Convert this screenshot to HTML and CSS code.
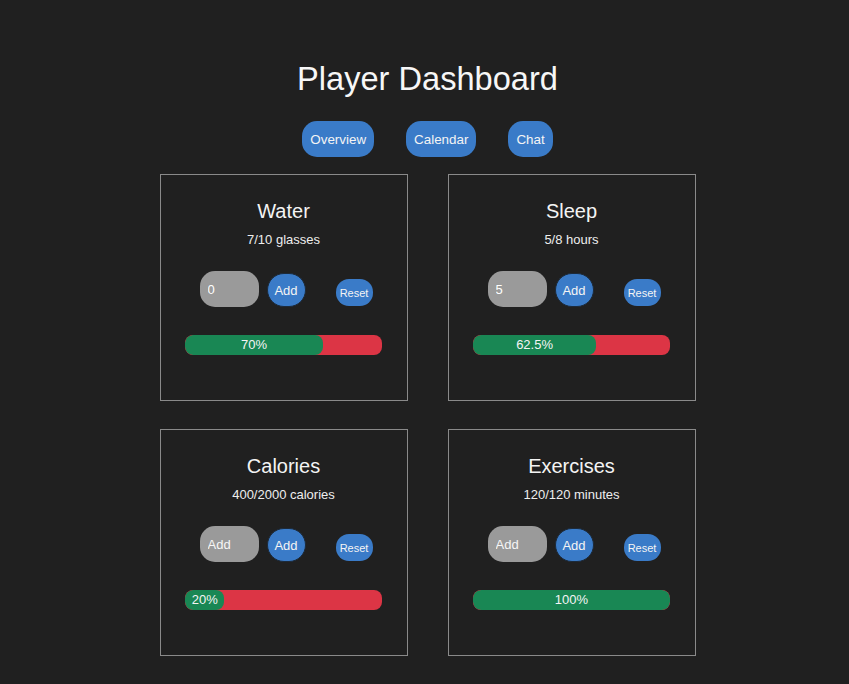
FILE: index.html
```html
<!DOCTYPE html>
<html lang="en">
<head>
<meta charset="utf-8">
<title>Player Dashboard</title>
<link rel="stylesheet" href="styles.css">
</head>
<body>
<div class="page">
  <h1 class="title">Player Dashboard</h1>
  <nav class="nav">
    <button class="nav-btn">Overview</button>
    <button class="nav-btn">Calendar</button>
    <button class="nav-btn">Chat</button>
  </nav>
  <main class="grid">
    <section class="card">
      <h2 class="card-title">Water</h2>
      <p class="card-sub">7/10 glasses</p>
      <div class="controls">
        <input class="amount" type="text" value="0">
        <button class="add-btn">Add</button>
        <button class="reset-btn">Reset</button>
      </div>
      <div class="bar"><div class="fill" style="width:70%">70%</div></div>
    </section>
    <section class="card">
      <h2 class="card-title">Sleep</h2>
      <p class="card-sub">5/8 hours</p>
      <div class="controls">
        <input class="amount" type="text" value="5">
        <button class="add-btn">Add</button>
        <button class="reset-btn">Reset</button>
      </div>
      <div class="bar"><div class="fill" style="width:62.5%">62.5%</div></div>
    </section>
    <section class="card">
      <h2 class="card-title">Calories</h2>
      <p class="card-sub">400/2000 calories</p>
      <div class="controls">
        <input class="amount" type="text" placeholder="Add">
        <button class="add-btn">Add</button>
        <button class="reset-btn">Reset</button>
      </div>
      <div class="bar"><div class="fill" style="width:20%">20%</div></div>
    </section>
    <section class="card">
      <h2 class="card-title">Exercises</h2>
      <p class="card-sub">120/120 minutes</p>
      <div class="controls">
        <input class="amount" type="text" placeholder="Add">
        <button class="add-btn">Add</button>
        <button class="reset-btn">Reset</button>
      </div>
      <div class="bar"><div class="fill" style="width:100%">100%</div></div>
    </section>
  </main>
</div>
</body>
</html>
```
FILE: styles.css
```css
* { box-sizing: border-box; }

html, body {
  background: #202020;
}

body {
  margin: 0;
  padding: 0 0 0 6px;
  font-family: "Liberation Sans", Arial, sans-serif;
  color: #f2f2f2;
}

.page {
  display: flex;
  flex-direction: column;
  align-items: center;
  padding-top: 60px;
}

.title {
  margin: 0;
  font-size: 32.6px;
  line-height: 37px;
  font-weight: normal;
  color: #f7f7f7;
}

.nav {
  display: flex;
  gap: 32px;
  margin-top: 24px;
}

.nav-btn {
  height: 36px;
  padding: 0 8px;
  border: none;
  border-radius: 15px;
  background: #3a7bc8;
  color: #f4f4f4;
  font-family: "Liberation Sans", Arial, sans-serif;
  font-size: 13.4px;
}

.grid {
  display: grid;
  grid-template-columns: 248px 248px;
  column-gap: 40px;
  row-gap: 28px;
  margin-top: 17px;
}

.card {
  height: 227px;
  border: 1px solid #8a8a8a;
  padding-top: 25px;
  display: flex;
  flex-direction: column;
  align-items: center;
}

.card-title {
  margin: 0;
  font-size: 20px;
  line-height: 23px;
  font-weight: normal;
  color: #f4f4f4;
}

.card-sub {
  margin: 9px 0 0;
  font-size: 13px;
  line-height: 15px;
  color: #eeeeee;
}

.controls {
  align-self: stretch;
  display: flex;
  align-items: flex-start;
  margin-top: 24px;
  padding-left: 39px;
}

.amount {
  width: 59px;
  height: 36px;
  border: none;
  border-radius: 15px;
  background: #9a9a9a;
  color: #ffffff;
  padding: 0 0 0 8px;
  font-family: "Liberation Sans", Arial, sans-serif;
  font-size: 13px;
  outline: none;
}

.amount::placeholder {
  color: #f6f6f6;
  opacity: 1;
}

.add-btn {
  width: 39px;
  height: 34px;
  margin: 2px 0 0 8px;
  padding: 0;
  border: 1px solid #1c2a3a;
  border-radius: 17px;
  background: #3a7bc8;
  color: #f4f4f4;
  font-family: "Liberation Sans", Arial, sans-serif;
  font-size: 13px;
}

.reset-btn {
  width: 37px;
  height: 27px;
  margin: 8px 0 0 30px;
  padding: 0;
  border: none;
  border-radius: 13px;
  background: #3a7bc8;
  color: #f4f4f4;
  font-family: "Liberation Sans", Arial, sans-serif;
  font-size: 11px;
}

.bar {
  width: 80%;
  height: 20px;
  margin-top: 28px;
  border-radius: 8px;
  background: #dc3545;
  overflow: hidden;
}

.fill {
  height: 100%;
  border-radius: 8px;
  background: #198754;
  color: #f4f4f4;
  font-size: 13px;
  line-height: 20px;
  text-align: center;
  white-space: nowrap;
}
```
